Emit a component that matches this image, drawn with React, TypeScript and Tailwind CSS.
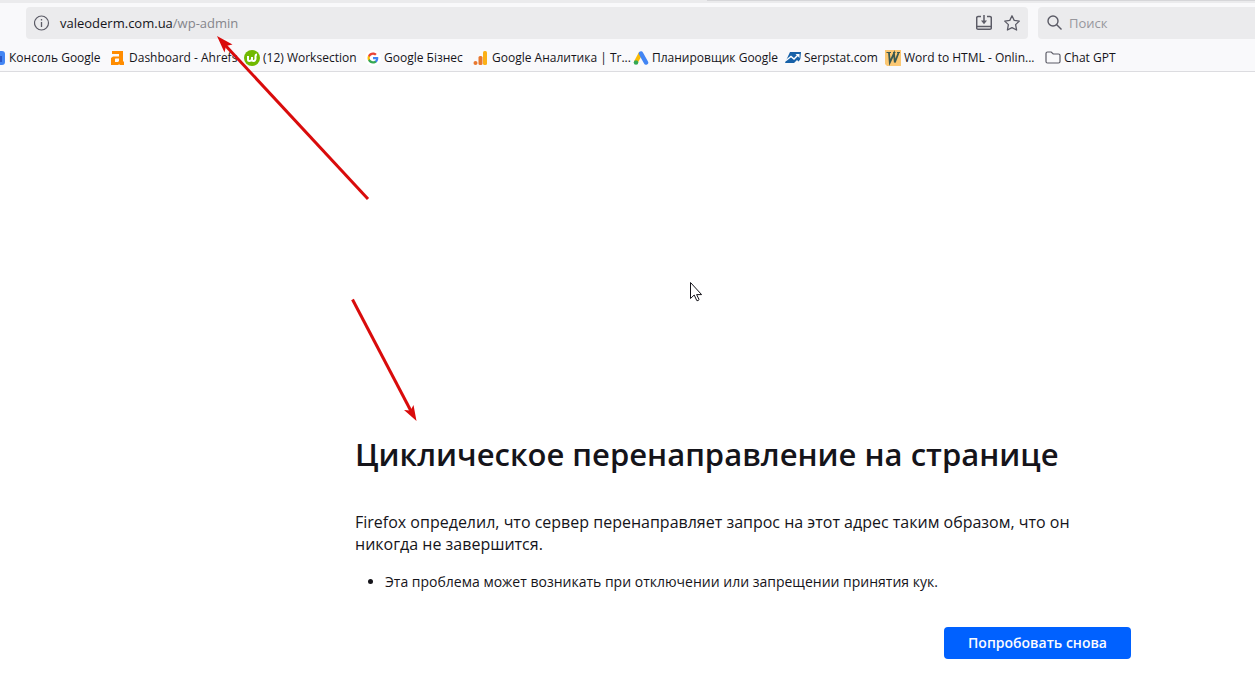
import type { ReactNode } from "react"

function ConsoleIcon() {
  return (
    <svg className="h-4 w-4 shrink-0" viewBox="0 0 16 16">
      <rect x="0" y="1" width="15" height="14" rx="3" fill="#4285f4" />
      <path d="M10 6h2v6h-2z" fill="#2a56c6" />
    </svg>
  )
}

function AhrefsIcon() {
  return (
    <svg className="h-4 w-4 shrink-0" viewBox="0 0 16 16">
      <path
        fill="#ff8c00"
        fillRule="evenodd"
        d="M2 1h11v10.500h1V15H9.500v-1L8 15H1V8l2-1.500h6V4H2zM5 9v3h3l1-1V8.500H5.500z"
      />
    </svg>
  )
}

function WorksectionIcon() {
  return (
    <svg className="h-4 w-4 shrink-0" viewBox="0 0 16 16">
      <circle cx="8" cy="8" r="8" fill="#71b900" />
      <path d="M4 6v3.500Q4 11 5.500 11T8 9.500V7v2.500Q8 11 9.500 11T11.500 9V6Q11.500 4.500 13 4.500" fill="none" stroke="#fff" strokeWidth="2" />
    </svg>
  )
}

function GoogleIcon() {
  return (
    <svg className="h-4 w-4 shrink-0" viewBox="-4 -4 32 32">
      <circle cx="12" cy="12" r="16" fill="#fff" />
      <path fill="#4285F4" d="M22.56 12.25c0-.78-.07-1.53-.2-2.25H12v4.26h5.92c-.26 1.37-1.04 2.53-2.21 3.31v2.77h3.57c2.08-1.92 3.28-4.74 3.28-8.09z" />
      <path fill="#34A853" d="M12 23c2.97 0 5.46-.98 7.28-2.66l-3.57-2.77c-.98.66-2.23 1.06-3.71 1.06-2.86 0-5.29-1.93-6.16-4.53H2.18v2.84C3.99 20.53 7.7 23 12 23z" />
      <path fill="#FBBC05" d="M5.84 14.09c-.22-.66-.35-1.36-.35-2.09s.13-1.43.35-2.09V7.07H2.18C1.43 8.55 1 10.22 1 12s.43 3.45 1.18 4.93z" />
      <path fill="#EA4335" d="M12 5.38c1.62 0 3.06.56 4.21 1.64l3.15-3.15C17.45 2.09 14.97 1 12 1 7.7 1 3.99 3.47 2.18 7.07l3.66 2.84c.87-2.6 3.3-4.53 6.16-4.53z" />
    </svg>
  )
}

function AnalyticsIcon() {
  return (
    <svg className="h-4 w-4 shrink-0" viewBox="0 0 16 16">
      <circle cx="2.500" cy="13" r="2" fill="#e8772e" />
      <rect x="5.500" y="6" width="4" height="9" rx="1.500" fill="#e8772e" />
      <rect x="10" y="1" width="4" height="14" rx="1.500" fill="#fbb016" />
    </svg>
  )
}

function AdsIcon() {
  return (
    <svg className="h-4 w-4 shrink-0" viewBox="0 0 16 16">
      <path d="M7.500 3.500 3 12" stroke="#fbbc04" strokeWidth="4" />
      <path d="M8 3.500 13 12.500" stroke="#4285f4" strokeWidth="4.500" strokeLinecap="round" />
      <circle cx="3" cy="12.500" r="2.300" fill="#34a853" />
    </svg>
  )
}

function SerpstatIcon() {
  return (
    <svg className="h-4 w-4 shrink-0" viewBox="0 0 16 16">
      <path d="M5 2h11l-1 11H0l2-4.500z" fill="#1761a8" />
      <path d="M1 10.500 6 6.500l3 2.500 4-4" fill="none" stroke="#fff" strokeWidth="1.400" />
      <path d="M10.500 4h4v4z" fill="#fff" />
      <path d="m9 13 3-3 1.500 1.500L16 8.500V14H9z" fill="#f9f9fb" />
    </svg>
  )
}

function WordIcon() {
  return (
    <svg className="h-4 w-4 shrink-0" viewBox="0 0 16 16">
      <path d="M0 0h16v16H2l-2-2z" fill="#fcc873" />
      <path d="M1.500 2.500h4.500M8 2.500h2.500M12 2.500h3" fill="none" stroke="#3b5951" strokeWidth="1.200" />
      <path d="M4 3l.8 9.500L9 3.500l.8 9L13.500 3" fill="none" stroke="#3b5951" strokeWidth="1.800" />
    </svg>
  )
}

function FolderIcon() {
  return (
    <svg className="h-4 w-4 shrink-0" viewBox="0 0 16 16" fill="none" stroke="#5b5b66" strokeWidth="1.200">
      <path d="M2.500 2h3.700l2 2h5.300a1.500 1.500 0 0 1 1.500 1.500v6a1.500 1.500 0 0 1-1.500 1.500h-11A1.500 1.500 0 0 1 1 11.500v-8A1.500 1.500 0 0 1 2.500 2z" />
    </svg>
  )
}

type Bookmark = { label: string; icon: ReactNode; width: string }

const bookmarks: Bookmark[] = [
  { label: "Консоль Google", icon: <ConsoleIcon />, width: "w-[120px]" },
  { label: "Dashboard - Ahrefs", icon: <AhrefsIcon />, width: "w-[134px]" },
  { label: "(12) Worksection", icon: <WorksectionIcon />, width: "w-[121px]" },
  { label: "Google Бізнес", icon: <GoogleIcon />, width: "w-[108px]" },
  { label: "Google Аналитика | Tr...", icon: <AnalyticsIcon />, width: "w-[160px]" },
  { label: "Планировщик Google", icon: <AdsIcon />, width: "w-[152px]" },
  { label: "Serpstat.com", icon: <SerpstatIcon />, width: "w-[100px]" },
  { label: "Word to HTML - Onlin...", icon: <WordIcon />, width: "w-[160px]" },
  { label: "Chat GPT", icon: <FolderIcon />, width: "w-[80px]" },
]

function Toolbar() {
  return (
    <div className="flex gap-[10px] pt-1 pl-[26px]">
      <div className="flex h-8 flex-1 items-center rounded bg-[#ebebed] px-2">
        <button type="button" aria-label="Информация о сайте">
          <svg className="h-4 w-4" viewBox="0 0 16 16" fill="none" stroke="#5b5b66">
            <circle cx="7.500" cy="8" r="7" strokeWidth="1.200" />
            <path d="M7.500 7v5M7.500 4v1.500" strokeWidth="1.300" />
          </svg>
        </button>
        <label className="relative ml-[10px] flex-1 pt-[2px]">
          <input
            aria-label="Адрес"
            defaultValue="valeoderm.com.ua/wp-admin"
            className="block w-full bg-transparent text-[13px] text-transparent caret-[#15141a] outline-none"
          />
          {/* dims the path part of the address */}
          <span aria-hidden="true" className="pointer-events-none absolute inset-0 flex items-center pt-[2px] text-[13px] text-[#15141a]">
            valeoderm.com.ua<span className="text-[#85858b]">/wp-admin</span>
          </span>
        </label>
        <div className="flex gap-3">
          <button type="button" aria-label="Установить">
            <svg className="h-4 w-4" viewBox="0 0 16 16" fill="none" stroke="#5b5b66" strokeWidth="1.500">
              <path d="M5 1.500H2Q.7 1.500.7 3v10q0 1.300 1.300 1.300h12q1.300 0 1.300-1.300V3q0-1.500-1.300-1.500h-3M1 11.500h14M8 0v8" />
              <path d="M5 5.500h6L8 9.300z" fill="#5b5b66" stroke="none" />
            </svg>
          </button>
          <button type="button" aria-label="Добавить в закладки">
            <svg className="h-4 w-4" viewBox="0 0 16 16" fill="none" stroke="#5b5b66" strokeWidth="1.300" strokeLinejoin="round">
              <path d="m8 .8 2.200 4.600 5.100.7-3.700 3.500 1 5.400L8 12.600 3.400 15l1-5.400L.7 6.100l5.100-.7z" />
            </svg>
          </button>
        </div>
      </div>
      <label className="flex h-8 w-[217px] items-center gap-[6px] rounded-l bg-[#ebebed] pl-[9px]">
        <svg className="h-4 w-4 shrink-0" viewBox="0 0 16 16" fill="none" stroke="#5b5b66" strokeWidth="1.400">
          <circle cx="6" cy="6" r="5" />
          <path d="m9.500 9.500 5 5" />
        </svg>
        <input
          type="search"
          aria-label="Поиск"
          placeholder="Поиск"
          className="w-full min-w-0 bg-transparent pt-[2px] text-[13px] outline-none placeholder:text-[#97979d]"
        />
      </label>
    </div>
  )
}

function Arrows() {
  return (
    <svg className="pointer-events-none absolute top-0 left-0" width="720" height="430" viewBox="0 0 720 430">
      <g stroke="#d90b0b" strokeWidth="3">
        <path d="M368 199 225 45" />
        <path d="M352.500 299.500 412 413" />
      </g>
      <g fill="#d90b0b">
        <path d="m217 36 15.500 8.500-6.500 1.500-1.500 6.500z" />
        <path d="m416.500 421-12.500-11 6.500.5 3-5.500z" />
      </g>
      <path
        d="M690.500 282.500v16l3.700-3.500 2.600 5.600q1.200.5 2.300-1l-2.500-5h5z"
        fill="#fff"
        stroke="#15141a"
      />
    </svg>
  )
}

export default function App() {
  return (
    <div className="relative min-h-screen overflow-x-hidden bg-white font-['Open_Sans','Noto_Sans',sans-serif] text-[#15141a]">
      <header className="border-b border-[#dcdce0] bg-[#f9f9fb]">
        <div className="flex h-[3px] bg-[#ebebed]">
          <div className="ml-auto h-px w-[548px] bg-[#d6d6d9]" />
        </div>
        <Toolbar />
        <nav className="-ml-[10px] flex h-8 items-center pt-[5px]">
          {bookmarks.map(({ label, icon, width }) => (
            <a key={label} href="#" className={`flex shrink-0 items-center gap-[3px] text-xs whitespace-nowrap ${width}`}>
              {icon}
              {label}
            </a>
          ))}
        </nav>
      </header>

      <main className="mr-[124px] ml-[355px] pt-[360px] pb-6">
        <h1 className="text-[31px] leading-[44px] font-semibold whitespace-nowrap">
          Циклическое перенаправление на странице
        </h1>
        <p className="mt-[35px] text-base leading-[22px]">
          Firefox определил, что сервер перенаправляет запрос на этот адрес таким образом, что он никогда не завершится.
        </p>
        <ul className="mt-4 list-disc pl-[30px] text-sm leading-[22px]">
          <li>Эта проблема может возникать при отключении или запрещении принятия кук.</li>
        </ul>
        <div className="mt-[34px] flex justify-end">
          <button type="button" className="h-8 rounded bg-[#0061ff] px-6 text-sm font-semibold text-[#fbfbfe]">
            Попробовать снова
          </button>
        </div>
      </main>

      <Arrows />
    </div>
  )
}
